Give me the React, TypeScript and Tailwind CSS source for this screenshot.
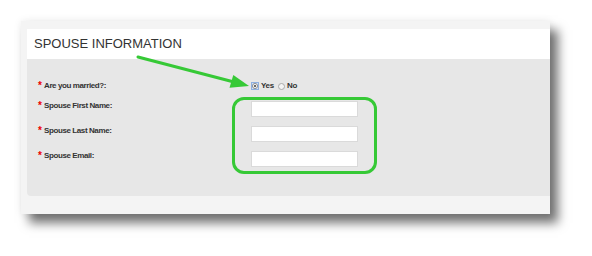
import React from 'react';

const rows = [
  { label: 'Spouse First Name:' },
  { label: 'Spouse Last Name:' },
  { label: 'Spouse Email:' },
];

const Label: React.FC<{ text: string }> = ({ text }) => (
  <div className="w-[213px] flex items-start leading-[10px]">
    <span className="text-[#e00] text-[10px] font-bold w-[6px] leading-[10px]">*</span>
    <span className="text-[8px] font-bold tracking-[-0.4px] text-[#333]">{text}</span>
  </div>
);

const App: React.FC = () => {
  return (
    <div className="relative w-[592px] h-[256px] bg-white pl-[21px] pt-[21px] overflow-hidden" style={{ fontFamily: '"Liberation Sans", Arial, sans-serif' }}>
      <div className="w-[529px] h-[193px] bg-[#f4f4f4] pt-[8px] pl-[6px] shadow-[8px_9px_10px_rgba(0,0,0,0.55),0_0_8px_rgba(0,0,0,0.08)]">
        <div className="h-[30px] bg-white flex items-center pl-[7px]">
          <h2 className="text-[13px] text-[#333]">SPOUSE INFORMATION</h2>
        </div>
        <div className="h-[137px] bg-[#e7e7e7] rounded-bl-[4px] pt-[20px] pl-[11px]">
          <div className="h-[14px] flex items-center">
            <Label text="Are you married?:" />
            <div className="flex items-center text-[8px] font-bold tracking-[-0.3px] text-[#333] gap-[2px]">
              <span className="w-[8px] h-[8px] bg-[#cfe0f7] border border-[#8fb0e0] flex items-center justify-center">
                <span className="w-[6px] h-[6px] rounded-full bg-white border border-[#888] flex items-center justify-center">
                  <span className="w-[2px] h-[2px] rounded-full bg-[#333]" />
                </span>
              </span>
              <span className="mr-[2px]">Yes</span>
              <span className="w-[7px] h-[7px] rounded-full bg-[#f4f4f4] border border-[#aaa]" />
              <span>No</span>
            </div>
          </div>
          <div className="flex flex-col gap-[9px] mt-[8px]">
            {rows.map((r) => (
              <div key={r.label} className="flex items-start">
                <Label text={r.label} />
                <input className="w-[107px] h-[16px] bg-white border border-[#dadada] outline-none" />
              </div>
            ))}
          </div>
        </div>
      </div>

      <div className="absolute left-[232px] top-[97px] w-[145px] h-[77px] border-[3px] border-[#36c936] rounded-[12px]" />

      <svg className="absolute left-0 top-0" width="592" height="256" viewBox="0 0 592 256">
        <line x1="138" y1="57" x2="234" y2="82" stroke="#36c936" strokeWidth="3" strokeLinecap="round" />
        <polygon points="249,86 229.5,87.8 233.3,74.9" fill="#36c936" />
      </svg>
    </div>
  );
};

export default App;
